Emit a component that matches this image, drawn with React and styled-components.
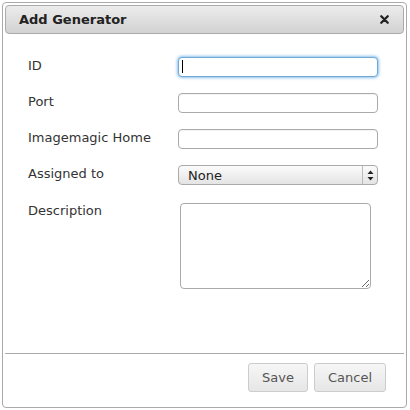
import React from 'react'
import styled, { createGlobalStyle } from 'styled-components'

const Global = createGlobalStyle`
body{
margin:0;
background:#fff;
font-family:"DejaVu Sans", Verdana, sans-serif;
}
`

const Dialog = styled.div`
margin:2px;
width:405px;
height:406px;
box-sizing:border-box;
border:1px solid #aaa;
border-radius:4px;
padding:2px;
background:#fff;
display:flex;
flex-direction:column;`

const Header = styled.div`
height:29px;
box-sizing:border-box;
border:1px solid #aaa;
border-radius:4px;
background:linear-gradient(#ececec, #d2d2d2);
display:flex;
align-items:center;
justify-content:space-between;
padding:0 14px 0 13px;`

const Title = styled.span`
font-weight:bold;
font-size:13px;
color:#222;`

const Body = styled.div`
flex:1;
padding:22px 0 0 23px;
display:grid;
grid-template-columns:150px 200px;
grid-auto-rows:min-content;
row-gap:16px;`

const Label = styled.label`
font-size:13px;
color:#333;
padding-top:2px;
line-height:16px;`

const Field = styled.div`
position:relative;
height:20px;`

const Input = styled.input`
width:200px;
height:20px;
box-sizing:border-box;
border:1px solid ${p => p.$focus ? '#6ea9d8' : '#aaa'};
border-radius:4px;
box-shadow:${p => p.$focus ? '0 0 3px 1px #8cc0ea' : 'inset 0 1px 1px rgba(0,0,0,0.05)'};
outline:none;
padding:0 4px;
font-family:inherit;
font-size:13px;`

const Caret = styled.span`
position:absolute;
left:4px;
top:4px;
width:1px;
height:13px;
background:#000;`

const Select = styled.div`
margin-top:1px;
width:200px;
height:20px;
box-sizing:border-box;
border:1px solid #aaa;
border-radius:4px;
background:linear-gradient(#fbfbfb, #e4e4e4);
display:flex;
align-items:center;
font-size:13px;
color:#222;`

const SelectText = styled.span`
flex:1;
padding-left:9px;`

const Arrows = styled.span`
width:14px;
height:100%;
border-left:1px solid #bbb;
display:flex;
align-items:center;
justify-content:center;`

const TextArea = styled.textarea`
margin:2px 0 0 2px;
width:191px;
height:86px;
box-sizing:border-box;
border:1px solid #aaa;
border-radius:4px;
outline:none;
font-family:inherit;`

const Footer = styled.div`
border-top:1px solid #aaa;
height:52px;
box-sizing:border-box;
padding:9px 18px 0 0;
display:flex;
justify-content:flex-end;
align-items:flex-start;
gap:6px;`

const Button = styled.button`
height:29px;
padding:0 13px;
border:1px solid #ccc;
border-radius:3px;
background:linear-gradient(#f6f6f6, #e6e6e6);
font-family:inherit;
font-size:13px;
color:#555;`

const Close = () => (
  <svg width="9" height="9" viewBox="0 0 9 9">
    <path d="M1.3 1.3 L7.7 7.7 M7.7 1.3 L1.3 7.7" stroke="#222" strokeWidth="2.3" strokeLinecap="round" />
  </svg>
)

const App = () => {
  return (
    <>
      <Global />
      <Dialog>
        <Header>
          <Title>Add Generator</Title>
          <Close />
        </Header>
        <Body>
          <Label>ID</Label>
          <Field>
            <Input $focus readOnly />
            <Caret />
          </Field>
          <Label>Port</Label>
          <Field><Input /></Field>
          <Label>Imagemagic Home</Label>
          <Field><Input /></Field>
          <Label>Assigned to</Label>
          <Select>
            <SelectText>None</SelectText>
            <Arrows>
              <svg width="7" height="11" viewBox="0 0 7 11">
                <path d="M3.5 0.5 L6.5 4 L0.5 4 Z M3.5 10.5 L6.5 7 L0.5 7 Z" fill="#222" />
              </svg>
            </Arrows>
          </Select>
          <Label>Description</Label>
          <TextArea />
        </Body>
        <Footer>
          <Button>Save</Button>
          <Button>Cancel</Button>
        </Footer>
      </Dialog>
    </>
  )
}

export default App
